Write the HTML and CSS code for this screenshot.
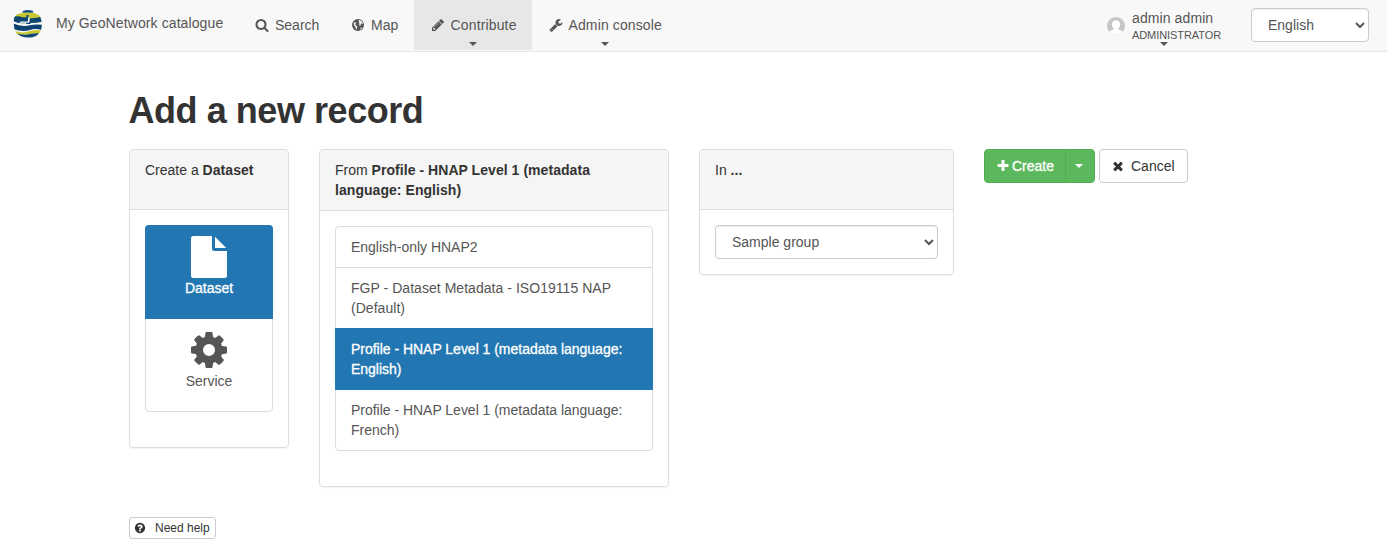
FILE: index.html
```html
<!DOCTYPE html>
<html lang="en">
<head>
<meta charset="utf-8">
<title>My GeoNetwork catalogue</title>
<link rel="stylesheet" href="styles.css">
</head>
<body>
<header class="navbar">
  <a class="brand">
    <svg class="logo" viewBox="0 0 30 30">
      <defs><clipPath id="globe"><path d="M10 2Q15 .2 20 2L20.500 3.700Q27 5 28 10Q30 17 27.500 22Q25 27 20 28Q14 29.500 7.500 27Q1 24 1 17Q-.5 8 4 5Q6 4 9 3.500Z"/></clipPath></defs>
      <g clip-path="url(#globe)">
        <path fill="#f7f7f7" d="M0 0h30v30H0z"/>
        <path fill="#164f7d" d="M8 0h14v3.300Q15 4.300 8 3.300z"/>
        <path fill="#c9c92f" d="M4 5Q15 2.600 26 5L28.500 9Q20 11 12 10Q6 9.500 1 9Z"/>
        <path fill="#0d4672" d="M0 8.500Q3 6.500 7 7.500Q10 8.600 13.500 8.300V6h2v3.500Q22 9.500 30 7.500v5Q23 14.300 17.500 14V15H13V14Q6 15.200 0 12Z"/>
        <path fill="#f7f7f7" d="M15 8.500h1.600V13H15zM7 12.500h9v1.300H7z"/>
        <path fill="#0b426f" d="M0 14.500Q9 18.200 17 16.200Q23 14.800 30 16v5.500Q23 19 17 21Q10 23.500 0 20Z"/>
        <path fill="#c9c92f" d="M2 22Q9 24.500 15 22.500Q22 20 28.500 21.500L27 25Q21 24 16 25.300Q10 26.500 3 24.800Z"/>
        <path fill="#0d4672" d="M3 24.500Q11 26.500 17 25Q22 23.800 28 24.500L22 30H6Z"/>
      </g>
    </svg>
    <span>My GeoNetwork catalogue</span>
  </a>
  <nav class="menu">
    <a class="item search"><svg class="icon" viewBox="0 0 1792 1792"><path d="M1216 832q0-185-131.500-316.500t-316.500-131.500-316.500 131.500-131.500 316.500 131.500 316.500 316.500 131.500 316.500-131.500 131.500-316.500zm512 832q0 52-38 90t-90 38q-54 0-90-38l-343-342q-179 124-399 124-143 0-273.500-55.500t-225-150-150-225-55.500-273.500 55.500-273.500 150-225 225-150 273.500-55.500 273.500 55.500 225 150 150 225 55.500 273.500q0 220-124 399l343 343q37 37 37 90z"/></svg><span>Search</span></a>
    <a class="item map"><svg class="icon" viewBox="0 0 14 14"><circle cx="7" cy="7" r="6"/><path class="land" d="M8.200 2 10.800 3.200 12 5.800 11.200 6 10.300 5.200 9.500 6.300 9.900 7.300 9 8 8.100 6.900 8.500 5.500 7.600 4.800 8.400 3.900 7.500 3ZM2.700 4.700 4.300 4.300 5.200 5 4.300 6 4.600 7.300 6.400 8.500 6 10 5.400 11.400 4.600 10.400 4.500 8.900 3 7.300ZM9.800 9.800 11.300 9.400 10 11.200 8.800 11.700Z"/></svg><span>Map</span></a>
    <a class="item contribute active"><svg class="icon" viewBox="0 0 1792 1792"><path d="M491 1536l91-91-235-235-91 91v107h128v128h107zm523-928q0-22-22-22-10 0-17 7l-542 542q-7 7-7 17 0 22 22 22 10 0 17-7l542-542q7-7 7-17zm-54-192l416 416-832 832h-416v-416zm683 96q0 53-37 90l-166 166-416-416 166-165q36-38 90-38 53 0 91 38l235 234q37 39 37 91z"/></svg><span>Contribute</span><i class="caret"></i></a>
    <a class="item admin"><svg class="icon" viewBox="0 0 1792 1792"><path d="M448 1472q0-26-19-45t-45-19-45 19-19 45 19 45 45 19 45-19 19-45zm644-420l-682 682q-37 37-90 37-52 0-91-37l-106-108q-38-36-38-90 0-53 38-91l681-681q39 98 114.500 173.500t173.500 114.500zm634-435q0 39-23 106-47 134-164.500 217.500t-258.500 83.500q-185 0-316.500-131.500t-131.500-316.500 131.500-316.500 316.500-131.500q58 0 121.500 16.500t107.500 46.500q16 11 16 28t-16 28l-293 169v224l193 107q5-3 79-48.500t135.500-81 70.500-35.500q15 0 23.500 10t8.500 25z"/></svg><span>Admin console</span><i class="caret"></i></a>
  </nav>
  <div class="user">
    <svg class="avatar" viewBox="0 0 18 18"><circle cx="9" cy="9" r="9" fill="#c6c6c6"/><path fill="#fff" d="M9 3.300c2.500 0 4.100 1.700 4.100 4.200 0 1.700-.7 3-1.700 3.900v.8l3.200 1.500q.7.500.8 1.300A9 9 0 0 1 9 18 9 9 0 0 1 2.600 15q.1-.8.8-1.300l3.200-1.500v-.8C5.600 10.500 4.900 9.200 4.900 7.500c0-2.500 1.600-4.200 4.100-4.200z"/></svg>
    <div class="who"><div class="name">admin admin</div><div class="role">ADMINISTRATOR</div></div>
    <i class="caret"></i>
  </div>
  <select class="select language"><option>English</option></select>
</header>
<main class="content">
  <h1 class="title">Add a new record</h1>
  <div class="columns">
    <section class="panel type">
      <div class="heading">Create a <strong>Dataset</strong></div>
      <div class="body">
        <div class="list tiles">
          <a class="tile selected"><svg class="big" viewBox="0 0 36 42"><path d="M2.300 0H21v12.700Q21 15 23.300 15H36v24.700Q36 42 33.700 42H2.300Q0 42 0 39.700V2.300Q0 0 2.300 0ZM24 .800 35.200 12H24Z"/></svg><span>Dataset</span></a>
          <a class="tile"><svg class="big" viewBox="128 0 1536 1792"><path d="M1152 896q0-106-75-181t-181-75-181 75-75 181 75 181 181 75 181-75 75-181zm512-109v222q0 12-8 23t-20 13l-185 28q-19 54-39 91 35 50 107 138 10 12 10 25t-9 23q-27 37-99 108t-94 71q-12 0-26-9l-138-108q-44 23-91 38-16 136-29 186-7 28-36 28h-222q-14 0-24.500-8.500t-11.500-21.500l-28-184q-49-16-90-37l-141 107q-10 9-25 9-14 0-25-11-126-114-165-168-7-10-7-23 0-12 8-23 15-21 51-66.500t54-70.500q-27-50-41-99l-183-27q-13-2-21-12.500t-8-23.500v-222q0-12 8-23t19-13l186-28q14-46 39-92-40-57-107-138-10-12-10-24 0-10 9-23 26-36 98.500-107.500t94.500-71.500q13 0 26 10l138 107q44-23 91-38 16-136 29-186 7-28 36-28h222q14 0 24.500 8.500t11.500 21.500l28 184q49 16 90 37l142-107q9-9 24-9 13 0 25 10 129 119 165 170 7 8 7 22 0 12-8 23-15 21-51 66.500t-54 70.500q26 50 41 98l183 28q13 2 21 12.500t8 23.500z"/></svg><span>Service</span></a>
        </div>
      </div>
    </section>
    <section class="panel template">
      <div class="heading">From <strong>Profile - HNAP Level 1 (metadata language: English)</strong></div>
      <div class="body">
        <div class="list">
          <a class="row">English-only HNAP2</a>
          <a class="row wide">FGP - Dataset Metadata - ISO19115 NAP (Default)</a>
          <a class="row selected">Profile - HNAP Level 1 (metadata language: English)</a>
          <a class="row">Profile - HNAP Level 1 (metadata language: French)</a>
        </div>
      </div>
    </section>
    <section class="panel group">
      <div class="heading">In <strong>...</strong></div>
      <div class="body"><select class="select"><option>Sample group</option></select></div>
    </section>
    <div class="actions">
      <button class="btn create"><svg class="icon" viewBox="0 0 1792 1792"><path d="M1600 736v192q0 40-28 68t-68 28h-416v416q0 40-28 68t-68 28h-192q-40 0-68-28t-28-68v-416h-416q-40 0-68-28t-28-68v-192q0-40 28-68t68-28h416v-416q0-40 28-68t68-28h192q40 0 68 28t28 68v416h416q40 0 68 28t28 68z"/></svg><span>Create</span></button>
      <button class="btn toggle"><i class="caret"></i></button>
      <button class="btn cancel"><svg class="icon" viewBox="0 0 1792 1792"><path d="M1490 1322q0 40-28 68l-136 136q-28 28-68 28t-68-28l-294-294-294 294q-28 28-68 28t-68-28l-136-136q-28-28-28-68t28-68l294-294-294-294q-28-28-28-68t28-68l136-136q28-28 68-28t68 28l294 294 294-294q28-28 68-28t68 28l136 136q28 28 28 68t-28 68l-294 294 294 294q28 28 28 68z"/></svg><span>Cancel</span></button>
    </div>
  </div>
  <button class="btn help"><svg class="icon" viewBox="0 0 1792 1792"><path d="M1024 1376v-192q0-14-9-23t-23-9h-192q-14 0-23 9t-9 23v192q0 14 9 23t23 9h192q14 0 23-9t9-23zm256-672q0-88-55.500-163t-138.500-116-170-41q-243 0-371 213-15 24 8 42l132 100q7 6 19 6 16 0 25-12 53-68 86-92 34-24 86-24 48 0 85.500 26t37.500 59q0 38-20 61t-68 45q-63 28-115.500 86.500t-52.500 125.500v36q0 14 9 23t23 9h192q14 0 23-9t9-23q0-19 21.500-49.500t54.500-49.500q32-18 49-28.500t46-35 44.500-48 28-60.500 12.500-81zm384 192q0 209-103 385.500t-279.500 279.500-385.500 103-385.500-103-279.500-279.500-103-385.500 103-385.500 279.500-279.500 385.500-103 385.500 103 279.500 279.500 103 385.500z"/></svg><span>Need help</span></button>
</main>
</body>
</html>
```

FILE: styles.css
```css
* { box-sizing: border-box; }
body { margin: 0; background: #fff; color: #333; font: 14px/20px "Liberation Sans", Arial, sans-serif; overflow: hidden; }
svg { display: block; flex: none; }
.icon { width: 14px; height: 14px; fill: currentColor; }
.caret { display: block; width: 0; height: 0; border: 4px solid transparent; border-top-color: currentColor; border-bottom: 0; }

.navbar { display: flex; height: 52px; background: #f8f8f8; border-bottom: 1px solid #e7e7e7; color: #555; white-space: nowrap; }
.brand { display: flex; width: 240px; padding: 9px 0 0 13px; gap: 13px; }
.brand span { padding-top: 4px; letter-spacing: .1px; }
.logo { width: 30px; height: 30px; }
.menu { display: flex; height: 50px; }
.item { position: relative; display: flex; padding: 15px 15px 0; gap: 6px; }
.item .icon { margin-top: 3px; }
.item .caret { position: absolute; left: 50%; bottom: 4px; margin-left: -4px; }
.search { width: 96px; }
.map { width: 78px; }
.land { fill: #f8f8f8; }
.contribute { width: 118px; padding-left: 16.5px; letter-spacing: .15px; }
.active { background: #e7e7e7; }
.admin { width: 145px; padding-left: 16.5px; letter-spacing: .12px; }
.user { position: relative; display: flex; margin-left: auto; width: 114px; gap: 7px; padding-top: 8px; }
.avatar { width: 18px; height: 18px; margin-top: 9px; }
.name { line-height: 20px; letter-spacing: .1px; }
.role { font-size: 11px; line-height: 14px; letter-spacing: -.08px; }
.user .caret { position: absolute; left: 53px; top: 42px; }

.select { height: 34px; width: 100%; padding: 6px 12px; border: 1px solid #ccc; border-radius: 4px; background: #fff; color: #555; font: inherit; box-shadow: inset 0 1px 1px rgba(0, 0, 0, .075); }
.language { width: 118px; margin: 8px 18px 0 30px; }

.content { padding: 37px 0 0 129px; }
.title { margin: 0 0 0 -.5px; font-size: 36px; line-height: 44px; font-weight: 700; letter-spacing: -.45px; }
.columns { display: flex; align-items: flex-start; height: 384px; padding-top: 16px; }
.panel { border: 1px solid #ddd; border-radius: 4px; box-shadow: 0 1px 1px rgba(0, 0, 0, .05); margin-right: 30px; }
.heading { min-height: 60px; padding: 10px 15px; background: #f5f5f5; border-bottom: 1px solid #ddd; border-radius: 3px 3px 0 0; }
.heading strong { letter-spacing: .05px; }
.body { padding: 15px; }
.type { width: 160px; height: 299px; }
.template { width: 350px; height: 338px; }
.group { width: 255px; height: 126px; }
.list { border: 1px solid #ddd; border-radius: 4px; color: #555; }
.tile { display: flex; flex-direction: column; align-items: center; height: 92px; padding-top: 10px; }
.big { width: 36px; height: 42px; fill: currentColor; }
.selected { background: #2277b2; color: #fff; margin: 0 -1px; -webkit-text-stroke: .3px #fff; }
.tile.selected { height: 94px; margin-top: -1px; border-radius: 4px 4px 0 0; padding-top: 11px; }
.row { display: block; padding: 10px 15px; letter-spacing: -.02px; }
.wide { letter-spacing: .04px; }
.row + .row { border-top: 1px solid #ddd; }
.row + .row.selected { padding: 11px 16px; border: 0; }
.row.selected + .row { border: 0; }

.actions { display: flex; }
.btn { display: flex; align-items: center; height: 34px; padding: 0 12px; border: 1px solid #ccc; border-radius: 4px; background: #fff; color: #333; font: inherit; white-space: nowrap; }
.create { width: 82px; padding: 0 11px; gap: 2px; background: #5cb85c; border-color: #4cae4c; color: #fff; border-radius: 4px 0 0 4px; -webkit-text-stroke: .3px #fff; }
.toggle { width: 30px; margin: 0 4px 0 -1px; padding: 0; justify-content: center; background: #5cb85c; border-color: #4cae4c; color: #fff; border-radius: 0 4px 4px 0; }
.toggle .caret { margin-right: 3px; }
.cancel { width: 89px; padding: 0 11px; gap: 6px; }
.help { width: 87px; height: 22px; padding: 0 4px; gap: 9px; font-size: 12px; border-radius: 3px; }
.help .icon { width: 12px; height: 12px; }
```
